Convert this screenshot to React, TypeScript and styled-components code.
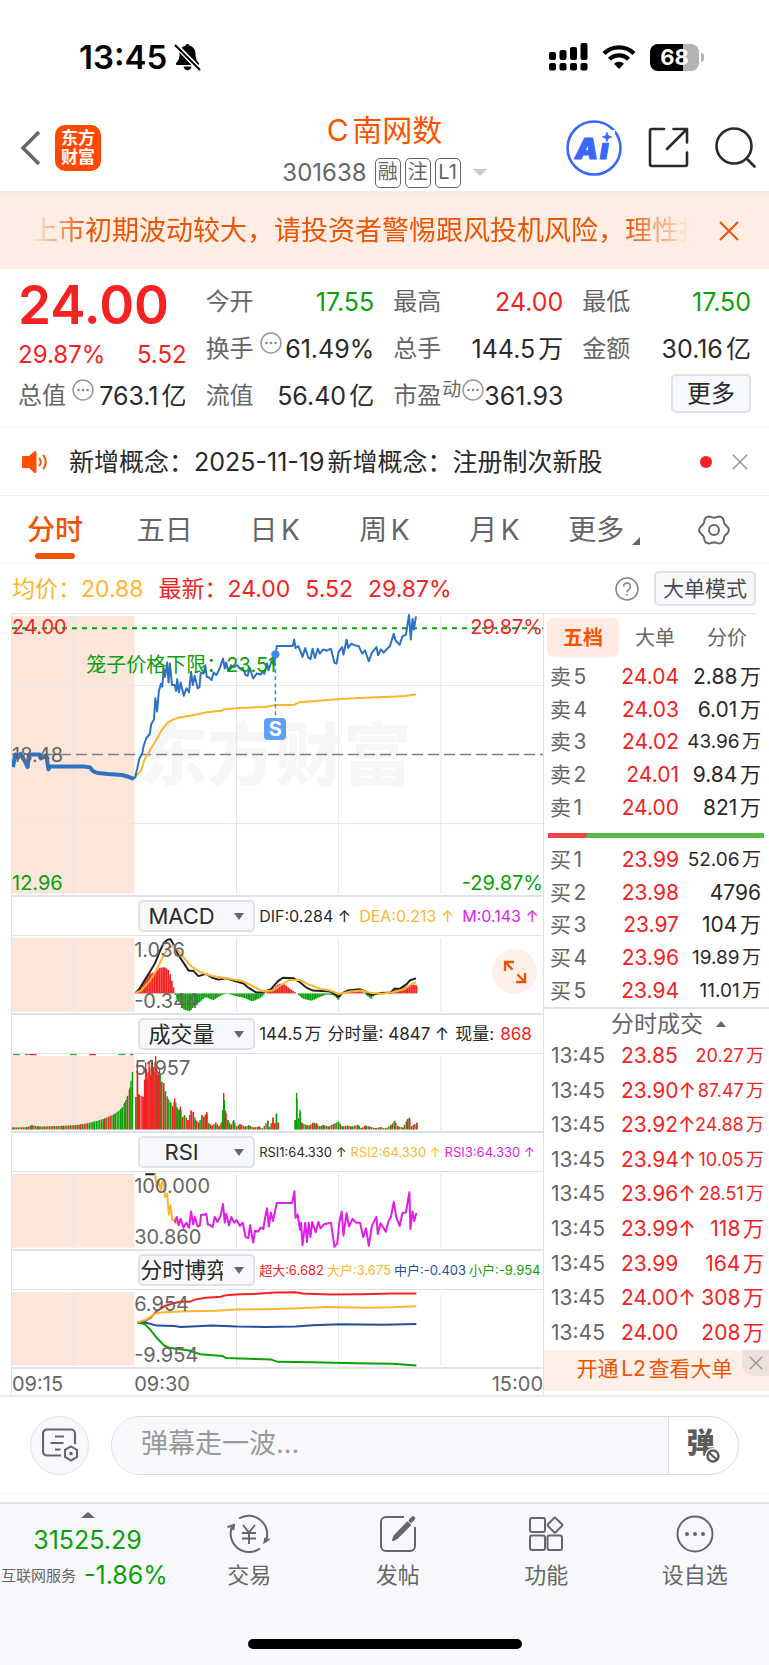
import React from "react";
import styled, { createGlobalStyle } from "styled-components";

const RED = "#f52222";
const GREEN = "#0aa00a";
const ORANGE = "#eb5502";
const YELLOW = "#fdb52e";
const MAGENTA = "#e01ee6";
const BLUE = "#2e72c4";
const NAVY = "#24509a";
const INK = "#2a2a2a";
const GREY = "#666666";
const LINE = "#dfe1e8";

const Global = createGlobalStyle`
  *, *::before, *::after { box-sizing: border-box; }
  body {
    margin: 0;
    background: #fff;
    color: ${INK};
    font-family: Inter, "Noto Sans CJK SC", sans-serif;
    text-autospace: normal;
  }
  button, input, select { font: inherit; color: inherit; }
  button { padding: 0; border: 0; background: none; cursor: pointer; }
  svg { display: block; flex: none; }
`;

const Page = styled.div`
  display: flex;
  flex-direction: column;
  min-height: 100vh;
`;

/* ---------- status bar ---------- */

const StatusBar = styled.div`
  display: flex;
  align-items: center;
  height: 104px;
  padding: 10px 65px 0 79px;
  gap: 14px;
  color: #000;
`;
const Clock = styled.span`
  display: flex;
  align-items: center;
  gap: 7px;
  margin-right: auto;
  font-size: 33px;
  line-height: 40px;
  font-weight: 600;
`;
const Battery = styled.span`
  display: flex;
  align-items: center;
  gap: 2px;
  &::after {
    content: "";
    width: 3px;
    height: 9px;
    border-radius: 0 4px 4px 0;
    background: #b4b4b4;
  }
`;
const BatteryBody = styled.span`
  width: 49px;
  height: 27px;
  border-radius: 8px;
  background: linear-gradient(90deg, #000 68%, #b4b4b4 68%);
  color: #fff;
  font-size: 22px;
  line-height: 27px;
  font-weight: 700;
  text-align: center;
`;

/* ---------- title bar ---------- */

const TitleBar = styled.header`
  display: grid;
  grid-template-columns: 1fr auto 1fr;
  align-items: center;
  height: 89px;
  padding: 0 13px;
  border-bottom: 2px solid #ececec;
`;
const Side = styled.div<{ $end?: boolean }>`
  display: flex;
  align-items: center;
  justify-content: ${(p) => (p.$end ? "flex-end" : "flex-start")};
  gap: ${(p) => (p.$end ? "26px" : "14px")};
  padding-left: ${(p) => (p.$end ? 0 : 7)}px;
`;
const Logo = styled.a`
  display: grid;
  place-content: center;
  width: 46px;
  height: 46px;
  border-radius: 10px;
  background: #ff4800;
  color: #fff;
  font-size: 17px;
  line-height: 19px;
  font-weight: 700;
  text-decoration: none;
`;
const Title = styled.div`
  display: flex;
  flex-direction: column;
  align-items: center;
  gap: 3px;
  padding-top: 5px;
`;
const StockName = styled.h1`
  margin: 0;
  color: #fb5200;
  font-size: 30px;
  line-height: 42px;
  font-weight: 400;
`;
const StockMeta = styled.div`
  display: flex;
  align-items: center;
  gap: 4px;
  height: 37px;
  color: ${GREY};
  font-size: 24px;
  line-height: 30px;
`;
const Code = styled.span`
  margin-right: 4px;
`;
const Tag = styled.span`
  width: 26px;
  height: 30px;
  border: 1px solid ${GREY};
  border-radius: 5px;
  font-size: 20px;
  line-height: 27px;
  text-align: center;
`;
const CaretDown = styled.span<{ $c?: string; $w?: number; $up?: boolean }>`
  width: 0;
  height: 0;
  border: ${(p) => (p.$w ?? 7)}px solid transparent;
  border-bottom-width: ${(p) => (p.$up ? 6 : 0)}px;
  border-top-width: ${(p) => (p.$up ? 0 : 7)}px;
  border-top-color: ${(p) => (p.$up ? "transparent" : p.$c ?? GREY)};
  border-bottom-color: ${(p) => (p.$up ? p.$c ?? GREY : "transparent")};
`;
const MetaCaret = styled(CaretDown)`
  margin-left: 8px;
`;

/* ---------- banners ---------- */

const RiskBanner = styled.div`
  display: flex;
  align-items: center;
  gap: 30px;
  height: 76px;
  padding: 0 30px 0 31px;
  background: #feede4;
  color: ${ORANGE};
`;
const Marquee = styled.p`
  flex: 1;
  margin: 0;
  overflow: hidden;
  white-space: nowrap;
  font-size: 27px;
  line-height: 40px;
  mask-image: linear-gradient(90deg, transparent, #000 56px, #000 calc(100% - 64px), transparent);
`;
const NewsBar = styled.div`
  display: flex;
  align-items: center;
  gap: 20px;
  height: 69px;
  padding: 0 21px;
  border-top: 1px solid #efefef;
  border-bottom: 1px solid #efefef;
`;
const NewsText = styled.a`
  flex: 1;
  color: ${INK};
  font-size: 25px;
  line-height: 40px;
  text-decoration: none;
  white-space: nowrap;
`;
const Dot = styled.span`
  width: 12px;
  height: 12px;
  border-radius: 6px;
  background: ${RED};
`;

/* ---------- quote ---------- */

const Quote = styled.section`
  display: grid;
  grid-template-columns: repeat(4, 1fr);
  grid-auto-rows: 47px;
  column-gap: 19px;
  padding: 9px 18px 8px;
`;
const PriceBlock = styled.div`
  grid-row: span 2;
  color: ${RED};
`;
const Price = styled.div`
  font-size: 53px;
  line-height: 54px;
  font-weight: 600;
`;
const Change = styled.div`
  display: flex;
  justify-content: space-between;
  font-size: 24px;
  line-height: 46px;
`;
const Field = styled.div`
  display: flex;
  align-items: center;
  white-space: nowrap;
`;
const FieldLabel = styled.span`
  color: ${GREY};
  font-size: 24px;
  line-height: 40px;
`;
const Sup = styled.sup`
  align-self: flex-start;
  margin-left: 1px;
  color: ${GREY};
  font-size: 19px;
  line-height: 36px;
`;
const Info = styled.button<{ $near?: boolean }>`
  align-self: flex-start;
  margin: 7px 0 0 ${(p) => (p.$near ? "1px" : "6px")};
`;
const FieldValue = styled.span<{ $c?: string }>`
  margin-left: auto;
  color: ${(p) => p.$c ?? INK};
  font-size: 25px;
  line-height: 40px;
`;
const SoftButton = styled.button<{ $w: number; $h: number; $size: number }>`
  width: ${(p) => p.$w}px;
  height: ${(p) => p.$h}px;
  border: 2px solid ${LINE};
  border-radius: 5px;
  background: #f7f8fb;
  color: ${INK};
  font-size: ${(p) => p.$size}px;
  line-height: 28px;
  white-space: nowrap;
`;
const ModeButton = styled(SoftButton)`
  color: #4a4a4a;
`;
const MoreField = styled(Field)`
  justify-content: flex-end;
  align-items: flex-start;
  padding-top: 2px;
`;

/* ---------- period tabs ---------- */

const Tabs = styled.nav`
  display: grid;
  grid-template-columns: repeat(7, 1fr);
  height: 68px;
  border-bottom: 1px solid #efefef;
`;
const Tab = styled.button<{ $on?: boolean }>`
  position: relative;
  display: flex;
  align-items: center;
  justify-content: center;
  color: ${(p) => (p.$on ? "#f45200" : GREY)};
  font-size: 28px;
  font-weight: ${(p) => (p.$on ? 500 : 400)};
  line-height: 40px;
  &::after {
    content: "";
    display: ${(p) => (p.$on ? "block" : "none")};
    position: absolute;
    bottom: 4px;
    width: 40px;
    height: 6px;
    border-radius: 3px;
    background: ${ORANGE};
  }
`;
const Corner = styled.span`
  align-self: flex-end;
  width: 0;
  height: 0;
  margin: 0 0 18px 8px;
  border-left: 8px solid transparent;
  border-bottom: 8px solid ${GREY};
`;

const SummaryRow = styled.div`
  display: flex;
  align-items: center;
  gap: 15px;
  height: 49px;
  padding: 0 13px 0 12px;
  font-size: 23px;
  line-height: 32px;
  white-space: nowrap;
`;
const Figure = styled.span<{ $c: string }>`
  color: ${(p) => p.$c};
`;
const HelpButton = styled.button`
  margin-left: auto;
`;

/* ---------- trading area ---------- */

const Trading = styled.main`
  display: grid;
  grid-template-columns: minmax(0, 1fr) 226px;
  padding-left: 11px;
  border-bottom: 2px solid #e9e9ec;
`;
const Charts = styled.section`
  border-left: 1px solid ${LINE};
`;
const Panel = styled.div<{ $h: number }>`
  position: relative;
  height: ${(p) => p.$h}px;
  border-top: 1px solid ${LINE};
  border-bottom: 2px solid ${LINE};
`;
const Plot = styled.svg`
  position: absolute;
  inset: 0;
  width: 100%;
  height: 100%;
  path, line { vector-effect: non-scaling-stroke; }
`;
const AxisLabel = styled.span<{ $c?: string; $right?: boolean; $top: string; $session?: boolean }>`
  position: absolute;
  top: ${(p) => p.$top};
  ${(p) => (p.$right ? "right: 0;" : p.$session ? "left: 23%;" : "left: 0;")}
  color: ${(p) => p.$c ?? GREY};
  font-size: 20px;
  line-height: 20px;
`;
const CageLabel = styled(AxisLabel)`
  left: 14%;
`;
const Watermark = styled.span`
  position: absolute;
  left: 24%;
  top: 104px;
  color: #f6f6f6;
  font-size: 68px;
  line-height: 74px;
  font-weight: 900;
`;
const SellMark = styled.span`
  position: absolute;
  left: 49%;
  top: 104px;
  width: 22px;
  height: 22px;
  margin-left: -8px;
  border-radius: 4px;
  background: #5c9fff;
  color: #fff;
  font-size: 20px;
  line-height: 22px;
  font-weight: 700;
  text-align: center;
`;
const ExpandButton = styled.button`
  position: absolute;
  right: 6px;
  top: 13px;
  display: grid;
  place-content: center;
  width: 45px;
  height: 45px;
  border-radius: 50%;
  background: #fff0ea;
`;
const IndicatorHead = styled.div`
  display: flex;
  align-items: center;
  height: 38px;
  padding: 0 0 0 23%;
`;
const Picker = styled.label`
  position: relative;
  display: flex;
  flex: none;
  align-items: center;
  margin: 0 4px;
`;
const PickerCaret = styled(CaretDown)`
  position: absolute;
  right: 11px;
  pointer-events: none;
`;
const Select = styled.select`
  appearance: none;
  width: 117px;
  height: 32px;
  padding: 0 30px 0 0;
  border: 2px solid ${LINE};
  border-radius: 5px;
  background: #f7f8fb;
  color: ${INK};
  font-size: 22px;
  line-height: 28px;
  text-align: center;
  text-align-last: center;
`;
const Readings = styled.div<{ $size: number; $gap: number }>`
  display: flex;
  gap: ${(p) => p.$gap}px;
  font-size: ${(p) => p.$size}px;
  line-height: 24px;
  white-space: nowrap;
`;
const TimeAxis = styled.div`
  position: relative;
  height: 26px;
`;

/* ---------- order book ---------- */

const Book = styled.aside`
  border-left: 1px solid ${LINE};
  display: flex;
  flex-direction: column;
`;
const BookTabs = styled.div`
  display: flex;
  height: 48px;
  margin-right: 13px;
  padding: 4px 0 4px 3px;
  border-top: 1px solid ${LINE};
`;
const BookTab = styled.button<{ $on?: boolean }>`
  flex: none;
  width: 72px;
  height: 39px;
  padding-bottom: 2px;
  border-radius: 6px;
  background: ${(p) => (p.$on ? "#feece4" : "transparent")};
  color: ${(p) => (p.$on ? "#fb5200" : GREY)};
  font-size: 20px;
  font-weight: ${(p) => (p.$on ? 600 : 400)};
`;
const Levels = styled.table`
  width: 100%;
  height: 163px;
  border-collapse: collapse;
  table-layout: fixed;
`;
const LevelCell = styled.td<{ $c?: string; $small?: boolean; $w?: number }>`
  width: ${(p) => (p.$w ? p.$w + "px" : "auto")};
  padding: 0 8px 0 0;
  color: ${(p) => p.$c ?? INK};
  font-size: ${(p) => (p.$small ? 19 : 21)}px;
  line-height: 30px;
  text-align: right;
  white-space: nowrap;
`;
const LevelName = styled.th`
  width: 60px;
  padding: 0 0 0 6px;
  color: ${GREY};
  font-size: 21px;
  font-weight: 400;
  line-height: 30px;
  text-align: left;
`;
const RatioBar = styled.div`
  height: 5px;
  margin: 9px 5px 6px 4px;
  background: linear-gradient(130deg, #ef4444 31px, #58b845 31px);
`;
const TradesTitle = styled.button`
  display: flex;
  align-items: center;
  justify-content: center;
  gap: 13px;
  height: 32px;
  padding-left: 24px;
  border-top: 2px solid ${LINE};
  color: ${GREY};
  font-size: 23px;
  line-height: 28px;
`;
const Trades = styled.table`
  width: 100%;
  height: 311px;
  border-collapse: collapse;
  table-layout: fixed;
`;
const TradeCell = styled.td<{ $c?: string; $size?: number; $right?: boolean; $w?: number }>`
  width: ${(p) => (p.$w ? p.$w + "px" : "auto")};
  padding: 0 ${(p) => (p.$right ? 5 : 0)}px 0 ${(p) => (p.$c === GREY ? 7 : 0)}px;
  color: ${(p) => p.$c ?? RED};
  font-size: ${(p) => p.$size ?? 21}px;
  line-height: 30px;
  text-align: ${(p) => (p.$right ? "right" : "left")};
  white-space: nowrap;
`;
const L2Banner = styled.div`
  position: relative;
  height: 41px;
  margin-bottom: 4px;
  background: #feefe8;
`;
const L2Link = styled.a`
  display: block;
  padding-right: 4px;
  color: ${ORANGE};
  font-size: 21px;
  line-height: 38px;
  text-align: center;
  text-decoration: none;
`;
const L2Close = styled.button`
  position: absolute;
  top: 0;
  right: 0;
  display: grid;
  place-content: center;
  width: 27px;
  height: 26px;
  border-radius: 0 0 0 12px;
  background: #efe1db;
`;

/* ---------- comment bar & bottom nav ---------- */

const CommentBar = styled.form`
  display: flex;
  align-items: center;
  gap: 22px;
  height: 97px;
  padding: 0 30px;
  border-bottom: 1px solid #f1f1f1;
`;
const RoundButton = styled.button`
  display: grid;
  place-content: center;
  flex: none;
  width: 59px;
  height: 59px;
  border: 1px solid ${LINE};
  border-radius: 50%;
  background: #f7f8fb;
`;
const CommentField = styled.div`
  display: flex;
  flex: 1;
  height: 59px;
  border: 1px solid #d9dbe2;
  border-radius: 30px;
  overflow: hidden;
`;
const CommentInput = styled.input`
  flex: 1;
  min-width: 0;
  padding: 0 29px 3px;
  border: 0;
  border-right: 1px solid #d9dbe2;
  background: #f7f8fb;
  font-size: 27px;
  &::placeholder { color: #999; opacity: 1; }
`;
const BarrageButton = styled.button`
  position: relative;
  width: 69px;
  padding: 0 6px 4px 0;
  color: #5c5c5c;
  font-size: 28px;
  line-height: 40px;
  font-weight: 900;
`;
const BanBadge = styled.svg`
  position: absolute;
  left: 36px;
  top: 31px;
`;
const BottomNav = styled.footer`
  flex: 1;
  display: flex;
  flex-direction: column;
  margin-top: 8px;
  border-top: 2px solid ${LINE};
  background: #f7f8fb;
`;
const NavRow = styled.nav`
  display: grid;
  grid-template-columns: 175px repeat(4, 1fr);
`;
const NavItem = styled.button`
  display: flex;
  flex-direction: column;
  align-items: center;
  padding-top: 10px;
  color: ${GREY};
  font-size: 22px;
  line-height: 42px;
`;
const IndexItem = styled.button`
  display: flex;
  flex-direction: column;
  align-items: center;
  padding-top: 8px;
  color: ${GREEN};
  font-size: 25px;
  line-height: 35px;
`;
const IndexValue = styled.span`
  margin-top: 5px;
`;
const IndexLine = styled.span`
  display: flex;
  align-self: flex-start;
  gap: 8px;
  padding-left: 1px;
  white-space: nowrap;
`;
const IndexName = styled.span`
  color: ${GREY};
  font-size: 15px;
`;
const HomeIndicator = styled.div`
  width: 274px;
  height: 10px;
  margin: auto auto 16px;
  border-radius: 5px;
  background: #000;
`;

/* ---------- chart data ---------- */

type Pt = [number, number];

const parse = (s: string): Pt[] => s.trim().split(/\s+/).map((p) => p.split(",").map(Number) as Pt);
const toPath = (s: string) => "M" + s.trim().replace(/\s+/g, " L");

const OPEN_CALL = "36,488 42,450 50,460 58,448 70,470 78,488 82,450 112,450 116,462 132,452 138,495 142,486 240,486 258,489 266,500 280,506 310,509 350,512 370,518 384,524";
const PRICE = `384,524 388,518 394,492 400,462 408,448 412,425 420,400 430,388 434,358 442,345 446,280 451,320 456,260 462,236 466,245 470,190 474,215 480,172 484,232 488,175 494,240 502,240 506,258 509,222 514,262 519,232 528,272 536,250 543,262 549,200 554,240 559,212 568,250 573,246 577,202 585,205 590,180 594,215 602,218 608,225 614,202 622,210 632,188 641,160 646,190 650,172 656,198 664,180 672,186 682,180 690,190 698,188 706,210 712,212 718,188 728,220 738,205 750,208 756,198 760,206 768,175 772,195 782,165 788,180 796,122 842,122 846,103 850,128 858,122 866,142 870,155 878,128 886,155 893,162 899,130 906,158 914,130 920,145 930,132 940,136 952,130 962,172 968,175 974,140 984,125 988,148 997,103 1002,128 1010,115 1022,120 1032,122 1042,145 1050,135 1061,168 1070,142 1083,125 1088,150 1096,132 1104,142 1114,130 1122,122 1133,85 1138,105 1150,118 1158,92 1168,88 1177,28 1182,102 1187,40 1191,72 1197,32`;
const AVERAGE = "388,518 405,498 415,465 430,438 445,412 458,388 470,368 484,352 500,343 515,338 550,332 595,322 636,318 645,313 690,309 760,306 795,300 845,300 860,292 900,289 975,282 1050,278 1125,275 1165,273 1197,268";

const DIF = "388,298 400,285 415,258 430,232 445,205 458,170 470,142 482,131 490,130 500,150 510,175 525,200 542,228 555,228 570,245 592,238 610,250 628,256 650,252 680,262 700,268 715,282 735,295 755,296 780,285 800,260 815,250 845,252 860,262 880,280 900,290 950,293 962,300 974,310 985,298 1000,290 1035,286 1050,292 1068,304 1095,298 1125,296 1135,284 1150,285 1170,270 1180,258 1197,252";
const DEA = "388,298 405,290 430,260 450,225 470,180 485,155 497,150 512,165 530,190 550,215 575,232 610,245 650,252 695,260 725,275 755,292 785,290 810,272 830,258 860,256 885,270 920,284 950,290 975,301 1010,293 1040,290 1070,298 1100,300 1130,295 1165,285 1182,272 1197,264";
const HIST = "388,299 400,285 415,255 430,238 445,232 460,218 475,218 485,228 492,255 498,280 501,299 510,320 525,348 545,355 560,335 575,325 590,310 612,320 640,302 655,300 680,308 700,312 725,324 750,312 762,299 785,285 800,270 815,268 830,282 852,298 870,315 895,322 915,312 940,302 960,305 974,320 982,299 1010,290 1040,292 1046,299 1068,316 1078,300 1110,299 1130,288 1150,285 1185,270 1200,275";

const VOL_OPEN = "36,703 75,702 90,696 110,700 180,698 230,694 270,685 300,675 330,660 350,642 358,625 365,608 373,578 380,530";
const VOL_AM = "390,608 394,505 398,600 412,608 418,500 423,552 428,500 433,540 437,492 442,530 447,480 452,540 458,520 463,560 470,565 475,590 482,612 490,625 497,640 502,612 508,640 514,650 518,638 524,672 530,665 540,680 549,650 556,655 562,680 572,688 580,665 586,670 594,655 600,690 610,697 620,688 630,698 638,685 643,595 648,650 655,680 664,695 672,680 680,700 690,692 705,700 715,696 730,703 745,700 755,706 770,682 776,704 785,672 790,690 795,660 800,688";
const VOL_PM = "849,680 853,595 858,680 863,648 868,688 880,695 890,697 900,688 910,690 920,700 930,695 945,700 960,692 974,685 985,700 1000,697 1010,700 1030,695 1040,705 1052,697 1063,700 1080,705 1095,702 1110,706 1125,695 1136,682 1145,700 1160,703 1172,678 1178,672 1184,700 1190,695 1200,688";

const RSI_FAST = "445,128 450,170 456,150 462,178 466,152 470,150 474,200 480,190 485,255 490,225 495,272 502,270 506,285";
const RSI_MAIN = `502,280 508,262 513,288 519,268 527,296 535,280 543,296 549,245 555,285 560,262 568,292 574,290 578,255 590,255 593,252 597,285 605,288 611,294 617,262 625,278 634,258 641,222 646,280 650,252 658,288 665,262 673,280 680,272 690,290 698,280 706,325 714,328 719,288 728,342 733,305 742,308 750,295 757,300 763,260 768,235 773,292 779,248 785,275 796,219 840,219 847,182 850,265 856,255 863,302 866,280 870,350 878,280 883,340 888,280 893,325 898,278 908,310 916,278 922,298 932,285 952,280 962,355 970,345 976,280 983,245 988,320 997,250 1004,292 1014,268 1024,280 1036,280 1045,325 1053,298 1061,352 1070,290 1083,262 1087,315 1095,282 1110,308 1118,275 1125,262 1133,215 1140,262 1150,290 1158,250 1168,248 1178,185 1181,300 1187,245 1192,275 1198,250`;

const FLOW = [
  { c: RED, d: "395,577 415,574 435,560 450,542 475,525 500,517 520,512 545,513 560,506 590,500 635,497 650,492 690,489 740,488 790,484 850,483 870,487 950,490 1040,489 1130,487 1198,487" },
  { c: NAVY, d: "395,577 420,578 450,587 500,588 520,591 610,587 680,590 760,591 850,590 900,586 980,583 1100,584 1198,582" },
  { c: GREEN, d: "395,577 415,582 430,598 450,625 470,648 485,656 540,664 575,676 640,682 650,688 780,693 800,700 900,701 1020,704 1130,706 1198,711" },
  { c: YELLOW, d: "395,577 420,568 445,550 470,545 540,542 620,541 680,537 760,536 860,533 940,529 1050,531 1130,530 1198,527" },
];

/** Samples a polyline every `step` units, keeping its own vertices so peaks survive. */
function sample(s: string, step: number, keep = true): Pt[] {
  const pts = parse(s);
  const out: Pt[] = keep ? [...pts] : [];
  for (let x = pts[0][0]; x <= pts[pts.length - 1][0]; x += step) {
    const i = Math.max(1, pts.findIndex((p) => p[0] >= x));
    const [x0, y0] = pts[i - 1];
    const [x1, y1] = pts[i];
    out.push([x, y0 + ((y1 - y0) * (x - x0)) / (x1 - x0)]);
  }
  return out.sort((a, b) => a[0] - b[0]);
}

const GRID_X = [209, 680, 974, 1269];

function Grid({ y, h }: { y: number; h: number }) {
  return (
    <>
      <rect x={33} y={y + 6} width={353} height={h - 10} fill="#fce6da" />
      {GRID_X.map((x) => (
        <line key={x} x1={x} x2={x} y1={y + 6} y2={y + h - 3} stroke="#e4e6f0" strokeWidth={1} />
      ))}
    </>
  );
}

function Line({ d, c, w = 2 }: { d: string; c: string; w?: number }) {
  return <path d={toPath(d)} fill="none" stroke={c} strokeWidth={w} strokeLinejoin="round" />;
}

function Chart({ y, h, children }: { y: number; h: number; children: React.ReactNode }) {
  return (
    <Plot viewBox={`33 ${y} 1530 ${h}`} preserveAspectRatio="none" aria-hidden="true">
      <Grid y={y} h={h} />
      {children}
    </Plot>
  );
}

function VolumeBars({ d, tone }: { d: string; tone: (x: number, i: number) => string }) {
  return (
    <>
      {sample(d, 5).map(([x, y], i) => (
        <rect key={i} x={x - 2} y={y} width={4} height={709 - y} fill={tone(x, i)} />
      ))}
    </>
  );
}

const mixed = (x: number, i: number) => (Math.sin(i * 12.9 + x * 0.7) > 0 ? RED : GREEN);

/* ---------- small icons ---------- */

function Cross({ size, c, w = 2 }: { size: number; c: string; w?: number }) {
  return (
    <svg width={size} height={size} viewBox="0 0 20 20" stroke={c} strokeWidth={w} fill="none">
      <path d="M1 1 19 19M19 1 1 19" />
    </svg>
  );
}

function InfoIcon() {
  return (
    <svg width="22" height="22" viewBox="0 0 22 22" fill="none" stroke="#999" strokeWidth="1.5">
      <circle cx="11" cy="11" r="10" />
      <g fill="#888" stroke="none">
        <circle cx="6.5" cy="11" r="1.3" />
        <circle cx="11" cy="11" r="1.3" />
        <circle cx="15.5" cy="11" r="1.3" />
      </g>
    </svg>
  );
}

const gearPath =
  "M" +
  Array.from({ length: 72 }, (_, i) => {
    const a = (i * Math.PI) / 36;
    const r = 13.6 + 1.3 * Math.cos(6 * a);
    return `${(17 + r * Math.cos(a)).toFixed(2)} ${(17 + r * Math.sin(a)).toFixed(2)}`;
  }).join("L") +
  "Z";

/* ---------- sections ---------- */

function Header() {
  return (
    <>
      <StatusBar>
        <Clock>
          13:45
          <svg width="27" height="28" viewBox="0 0 27 28" fill="#000">
            <path d="M13.5 1c1.2 0 2 .8 2.2 1.8 3.8 1 5.8 4 5.8 8 0 5 1.3 7 3.3 9.2.8 1 .2 2-1 2H3.2c-1.2 0-1.800-1-1-2 2-2.200 3.300-4.200 3.300-9.200 0-4 2-7 5.800-8C11.500 1.800 12.300 1 13.500 1z" />
            <path d="M9.5 23.5h8c-.4 2.3-2 3.700-4 3.700s-3.600-1.400-4-3.700z" />
            <path d="M2 2.500 25.500 26.500" stroke="#fff" strokeWidth="5" />
            <path d="M1.500 2.500 25.500 26.500" stroke="#000" strokeWidth="2" strokeLinecap="round" />
          </svg>
        </Clock>
        <svg width="39" height="28" viewBox="0 0 39 28" fill="#000">
          <rect x="0" y="9" width="7" height="8" rx="2" />
          <rect x="10.5" y="7" width="7" height="10" rx="2" />
          <rect x="21" y="4" width="7" height="13" rx="2" />
          <rect x="31.5" y="0" width="7" height="17" rx="2" />
          <rect x="0" y="20" width="7" height="7.5" rx="2" />
          <rect x="10.5" y="20" width="7" height="7.5" rx="2" />
          <rect x="21" y="20" width="7" height="7.5" rx="2" />
          <rect x="31.5" y="20" width="7" height="7.5" rx="2" />
        </svg>
        <svg width="34" height="26" viewBox="0 0 34 26" fill="none" stroke="#000" strokeWidth="4.4">
          <path d="M2 9.500a21.500 21.500 0 0 1 30 0" />
          <path d="M7.500 15.200a13.600 13.600 0 0 1 19 0" />
          <path d="M17 25l-5-5.200a7.200 7.200 0 0 1 10 0z" fill="#000" stroke="none" />
        </svg>
        <Battery>
          <BatteryBody>68</BatteryBody>
        </Battery>
      </StatusBar>

      <TitleBar>
        <Side>
          <button aria-label="返回">
            <svg width="21" height="36" viewBox="0 0 21 36" fill="none" stroke={GREY} strokeWidth="3.5">
              <path d="M19 2 3 18l16 16" />
            </svg>
          </button>
          <Logo href="#home">
            <span>东方</span>
            <span>财富</span>
          </Logo>
        </Side>
        <Title>
          <StockName>C南网数</StockName>
          <StockMeta>
            <Code>301638</Code>
            <Tag>融</Tag>
            <Tag>注</Tag>
            <Tag>L1</Tag>
            <MetaCaret $c="#c8c8c8" />
          </StockMeta>
        </Title>
        <Side $end>
          <button aria-label="AI 助手">
            <svg width="56" height="56" viewBox="0 0 56 56">
              <circle cx="28" cy="28" r="26.5" fill="#fff" stroke="#3a68ff" strokeWidth="2.6" />
              <text x="9 34" y="38.5" fill="#3a68ff" stroke="#3a68ff" strokeWidth="1.2" strokeLinejoin="round" fontSize="29" fontWeight="900" fontStyle="italic" fontFamily="Inter, sans-serif">
                Ai
              </text>
              <path d="M34 10h15v12.500H34z" fill="#fff" />
              <path d="M41 12.500c.8 3 1.500 3.700 4.500 4.500-3 .8-3.700 1.500-4.500 4.500-.8-3-1.500-3.700-4.500-4.500 3-.8 3.700-1.500 4.500-4.500z" fill="#3a68ff" stroke="#3a68ff" />
            </svg>
          </button>
          <button aria-label="分享">
            <svg width="41" height="41" viewBox="0 0 41 41" fill="none" stroke={INK} strokeWidth="2.6" strokeLinecap="round" strokeLinejoin="round">
              <path d="M16 2H4a2 2 0 0 0-2 2v33a2 2 0 0 0 2 2h33a2 2 0 0 0 2-2V25.500M25.500 2H39v13.500M38 3 19 22" />
            </svg>
          </button>
          <button aria-label="搜索">
            <svg width="41" height="41" viewBox="0 0 41 41" fill="none" stroke={INK} strokeWidth="2.6" strokeLinecap="round">
              <circle cx="19" cy="19" r="17.5" />
              <path d="m31.500 31.500 8 8" />
            </svg>
          </button>
        </Side>
      </TitleBar>

      <RiskBanner>
        <Marquee>上市初期波动较大，请投资者警惕跟风投机风险，理性投资</Marquee>
        <button aria-label="关闭风险提示">
          <Cross size={20} c={ORANGE} />
        </button>
      </RiskBanner>
    </>
  );
}

function QuotePanel() {
  return (
    <Quote>
      <PriceBlock>
        <Price>24.00</Price>
        <Change>
          <span>29.87%</span>
          <span>5.52</span>
        </Change>
      </PriceBlock>
      <Field><FieldLabel>今开</FieldLabel><FieldValue $c={GREEN}>17.55</FieldValue></Field>
      <Field><FieldLabel>最高</FieldLabel><FieldValue $c={RED}>24.00</FieldValue></Field>
      <Field><FieldLabel>最低</FieldLabel><FieldValue $c={GREEN}>17.50</FieldValue></Field>
      <Field>
        <FieldLabel>换手</FieldLabel>
        <Info aria-label="换手说明"><InfoIcon /></Info>
        <FieldValue>61.49%</FieldValue>
      </Field>
      <Field><FieldLabel>总手</FieldLabel><FieldValue>144.5万</FieldValue></Field>
      <Field><FieldLabel>金额</FieldLabel><FieldValue>30.16亿</FieldValue></Field>
      <Field>
        <FieldLabel>总值</FieldLabel>
        <Info aria-label="总值说明"><InfoIcon /></Info>
        <FieldValue>763.1亿</FieldValue>
      </Field>
      <Field><FieldLabel>流值</FieldLabel><FieldValue>56.40亿</FieldValue></Field>
      <Field>
        <FieldLabel>市盈</FieldLabel>
        <Sup>动</Sup>
        <Info $near aria-label="市盈说明"><InfoIcon /></Info>
        <FieldValue>361.93</FieldValue>
      </Field>
      <MoreField>
        <SoftButton $w={80} $h={39} $size={24}>更多</SoftButton>
      </MoreField>
    </Quote>
  );
}

function Indicator({ name, size, gap, readings, children }: {
  name: string; size: number; gap: number; readings: [string, string][]; children: React.ReactNode;
}) {
  return (
    <>
      <IndicatorHead>
        <Picker>
          <Select aria-label="指标" defaultValue={name}>
            <option>{name}</option>
          </Select>
          <PickerCaret $w={5} />
        </Picker>
        <Readings $size={size} $gap={gap}>
          {readings.map(([text, c]) => (
            <Figure key={text} $c={c}>{text}</Figure>
          ))}
        </Readings>
      </IndicatorHead>
      <Panel $h={80}>{children}</Panel>
    </>
  );
}

function ChartColumn() {
  return (
    <Charts>
      <Panel $h={284}>
        <Watermark aria-hidden="true">东方财富</Watermark>
        <Chart y={25} h={850}>
          <line x1={33} x2={1565} y1={241} y2={241} stroke="#e4e6f0" />
          <line x1={33} x2={1565} y1={659} y2={659} stroke="#e4e6f0" />
          <line x1={33} x2={1565} y1={450} y2={450} stroke="#808080" strokeWidth={1.5} strokeDasharray="11 5" />
          <line x1={33} x2={1565} y1={68} y2={68} stroke={GREEN} strokeWidth={2} strokeDasharray="5 5" />
          <Line d={AVERAGE} c={YELLOW} />
          <Line d={OPEN_CALL} c={BLUE} w={4} />
          <Line d={PRICE} c={BLUE} />
          <line x1={792} x2={792} y1={150} y2={340} stroke="#3d8bf2" strokeWidth={1.5} strokeDasharray="4 3" />
          <ellipse cx={792} cy={147} rx={12} ry={12.5} fill="#3d8bf2" />
        </Chart>
        <AxisLabel $top="3px" $c={RED}>24.00</AxisLabel>
        <AxisLabel $top="3px" $c={RED} $right>29.87%</AxisLabel>
        <AxisLabel $top="131px">18.48</AxisLabel>
        <AxisLabel $top="259px" $c={GREEN}>12.96</AxisLabel>
        <AxisLabel $top="259px" $c={GREEN} $right>-29.87%</AxisLabel>
        <CageLabel $top="41px" $c={GREEN}>笼子价格下限：23.51</CageLabel>
        <SellMark>S</SellMark>
      </Panel>

      <Indicator name="MACD" size={16} gap={8} readings={[["DIF:0.284 ↑", INK], ["DEA:0.213 ↑", YELLOW], ["M:0.143 ↑", MAGENTA]]}>
        <Chart y={120} h={240}>
          {sample(HIST, 5, false).map(([x, y], i) => (
            <rect key={i} x={x - 2} width={5} y={Math.min(y, 299)} height={Math.abs(y - 299)} fill={y < 299 ? RED : GREEN} />
          ))}
          <Line d={DIF} c="#222" />
          <Line d={DEA} c={YELLOW} />
        </Chart>
        <AxisLabel $top="4px" $session>1.036</AxisLabel>
        <AxisLabel $top="55px" $session>-0.344</AxisLabel>
        <ExpandButton aria-label="全屏">
          <svg width="24" height="24" viewBox="0 0 24 24" fill="none" stroke={ORANGE} strokeWidth="2.3">
            <path d="M2 11V2h9M2.500 2.500l7 7M22 13v9h-9M21.500 21.500l-7-7" />
          </svg>
        </ExpandButton>
      </Indicator>

      <Indicator name="成交量" size={17} gap={6} readings={[["144.5万", INK], ["分时量: 4847 ↑", INK], ["现量:", INK], ["868", RED]]}>
        <Chart y={474} h={240}>
          <VolumeBars d={VOL_OPEN} tone={(x) => (x > 376 || (x > 250 && x < 295) || (x > 330 && x < 358) ? GREEN : mixed(x, Math.floor(x / 20)))} />
          <VolumeBars d={VOL_AM} tone={(x, i) => (x < 392 ? GREEN : x < 450 ? RED : mixed(x, i))} />
          <VolumeBars d={VOL_PM} tone={(x, i) => (x > 850 && x < 866 ? GREEN : mixed(x, i))} />
          <path d="M36 476H100M200 476H225M255 476H290M340 476H380" stroke={GREEN} strokeWidth={1} strokeDasharray="7 5 3 2" />
          <path d="M80 476H105M258 476H275M373 476H383" stroke={RED} strokeWidth={1} />
        </Chart>
        <AxisLabel $top="4px" $session>51957</AxisLabel>
      </Indicator>

      <Indicator name="RSI" size={13} gap={4} readings={[["RSI1:64.330 ↑", INK], ["RSI2:64.330 ↑", YELLOW], ["RSI3:64.330 ↑", MAGENTA]]}>
        <Chart y={122} h={240}>
          <Line d="417,129 447,129" c="#222" />
          <Line d={RSI_FAST} c={YELLOW} />
          <Line d={RSI_MAIN} c={MAGENTA} />
        </Chart>
        <AxisLabel $top="4px" $session>100.000</AxisLabel>
        <AxisLabel $top="55px" $session>30.860</AxisLabel>
      </Indicator>

      <Indicator name="分时博弈" size={13} gap={3} readings={[["超大:6.682", RED], ["大户:3.675", YELLOW], ["中户:-0.403", NAVY], ["小户:-9.954", GREEN]]}>
        <Chart y={476} h={240}>
          {FLOW.map((f) => <Line key={f.c} d={f.d} c={f.c} />)}
        </Chart>
        <AxisLabel $top="4px" $session>6.954</AxisLabel>
        <AxisLabel $top="55px" $session>-9.954</AxisLabel>
      </Indicator>

      <TimeAxis>
        <AxisLabel $top="5px">09:15</AxisLabel>
        <AxisLabel $top="5px" $session>09:30</AxisLabel>
        <AxisLabel $top="5px" $right>15:00</AxisLabel>
      </TimeAxis>
    </Charts>
  );
}

const ASKS = [
  ["卖5", "24.04", "2.88万"],
  ["卖4", "24.03", "6.01万"],
  ["卖3", "24.02", "43.96万"],
  ["卖2", "24.01", "9.84万"],
  ["卖1", "24.00", "821万"],
];
const BIDS = [
  ["买1", "23.99", "52.06万"],
  ["买2", "23.98", "4796"],
  ["买3", "23.97", "104万"],
  ["买4", "23.96", "19.89万"],
  ["买5", "23.94", "11.01万"],
];
const TRADES = [
  ["23.85", "20.27万"],
  ["23.90↑", "87.47万"],
  ["23.92↑", "24.88万"],
  ["23.94↑", "10.05万"],
  ["23.96↑", "28.51万"],
  ["23.99↑", "118万"],
  ["23.99", "164万"],
  ["24.00↑", "308万"],
  ["24.00", "208万"],
];

function LevelTable({ rows }: { rows: string[][] }) {
  return (
    <Levels>
      <tbody>
        {rows.map(([name, price, size]) => (
          <tr key={name}>
            <LevelName scope="row">{name}</LevelName>
            <LevelCell $c={RED} $w={83}>{price}</LevelCell>
            <LevelCell $small={size.length > 5}>{size}</LevelCell>
          </tr>
        ))}
      </tbody>
    </Levels>
  );
}

function BookColumn() {
  return (
    <Book>
      <BookTabs>
        <BookTab $on>五档</BookTab>
        <BookTab>大单</BookTab>
        <BookTab>分价</BookTab>
      </BookTabs>
      <LevelTable rows={ASKS} />
      <RatioBar />
      <LevelTable rows={BIDS} />
      <TradesTitle>
        分时成交
        <CaretDown $w={5} $up />
      </TradesTitle>
      <Trades>
        <tbody>
          {TRADES.map(([price, size], i) => (
            <tr key={i}>
              <TradeCell $c={GREY} $w={77}>13:45</TradeCell>
              <TradeCell $w={73}>{price}</TradeCell>
              <TradeCell $right $size={size.length > 5 ? 18 : 21}>{size}</TradeCell>
            </tr>
          ))}
        </tbody>
      </Trades>
      <L2Banner>
        <L2Link href="#l2">开通L2查看大单</L2Link>
        <L2Close aria-label="关闭">
          <Cross size={14} c="#999" />
        </L2Close>
      </L2Banner>
    </Book>
  );
}

function Footer() {
  const stroke = { fill: "none", stroke: GREY, strokeWidth: 2 };
  return (
    <BottomNav>
      <NavRow>
        <IndexItem>
          <CaretDown $w={7} $up />
          <IndexValue>31525.29</IndexValue>
          <IndexLine>
            <IndexName>互联网服务</IndexName>
            <span>-1.86%</span>
          </IndexLine>
        </IndexItem>
        <NavItem>
          <svg width="44" height="40" viewBox="0 0 44 40" {...stroke}>
            <path d="M12 4.500A18.500 18.500 0 0 1 38.500 28M42.500 25l-5 3.200.8-4.500M33 34.500A18.500 18.500 0 0 1 5.500 11.500M.5 13l6.500-2-.8 5" />
            <path d="m16 11 6 7.500 6-7.500M15 19h14M15 24.500h14M22 18.500V30" />
          </svg>
          交易
        </NavItem>
        <NavItem>
          <svg width="44" height="40" viewBox="0 0 44 40" {...stroke}>
            <path d="M28 3H10a5 5 0 0 0-5 5v24a5 5 0 0 0 5 5h24a5 5 0 0 0 5-5V13" />
            <path d="m31.500 8.500 2.500 2.500L21 24l-4 2 1.500-4z" fill={GREY} strokeLinejoin="round" />
            <path d="m35 6.500 2-2" strokeWidth="4.5" strokeLinecap="round" />
          </svg>
          发帖
        </NavItem>
        <NavItem>
          <svg width="44" height="40" viewBox="0 0 44 40" {...stroke}>
            <rect x="6" y="4" width="15" height="14" rx="2" />
            <rect x="6" y="21.5" width="15" height="14.5" rx="2" />
            <rect x="23.5" y="21.5" width="14.5" height="14.5" rx="2" />
            <path d="m31 3.500 7.200 7a1 1 0 0 1 0 1.200L31.500 18.500a1 1 0 0 1-1.200 0l-6.600-6.800a1 1 0 0 1 0-1.200l6.600-6.800a.8.8 0 0 1 .7-.2z" />
          </svg>
          功能
        </NavItem>
        <NavItem>
          <svg width="44" height="40" viewBox="0 0 44 40" {...stroke}>
            <circle cx="22" cy="20" r="17.5" />
            <g fill={GREY} stroke="none">
              <circle cx="14" cy="20" r="2" />
              <circle cx="22" cy="20" r="2" />
              <circle cx="30" cy="20" r="2" />
            </g>
          </svg>
          设自选
        </NavItem>
      </NavRow>
      <HomeIndicator />
    </BottomNav>
  );
}

export default function App() {
  return (
    <Page>
      <Global />
      <Header />
      <QuotePanel />
      <NewsBar>
        <svg width="28" height="24" viewBox="0 0 28 24" fill="#ff4f00">
          <path d="M2 6h6l5-4.500q2.500-1.500 2.500 1.500v18q0 3-2.500 1.500L8 18H2q-1 0-1-1V7q0-1 1-1z" />
          <path d="M18.500 8.500q2.500 3.500 0 7M22.500 5.500q4.500 6.500 0 13" fill="none" stroke="#ff4f00" strokeWidth="2" strokeLinecap="round" />
        </svg>
        <NewsText href="#news">新增概念：2025-11-19新增概念：注册制次新股</NewsText>
        <Dot />
        <button aria-label="关闭消息">
          <Cross size={16} c="#999" />
        </button>
      </NewsBar>
      <Tabs>
        <Tab $on>分时</Tab>
        <Tab>五日</Tab>
        <Tab>日K</Tab>
        <Tab>周K</Tab>
        <Tab>月K</Tab>
        <Tab>更多<Corner /></Tab>
        <Tab aria-label="设置">
          <svg width="34" height="34" viewBox="0 0 34 34" fill="none" stroke={GREY} strokeWidth="2">
            <path d={gearPath} />
            <circle cx="17" cy="17" r="5" />
          </svg>
        </Tab>
      </Tabs>
      <SummaryRow>
        <Figure $c={YELLOW}>均价：20.88</Figure>
        <Figure $c={RED}>最新：24.00</Figure>
        <Figure $c={RED}>5.52</Figure>
        <Figure $c={RED}>29.87%</Figure>
        <HelpButton aria-label="帮助">
          <svg width="24" height="24" viewBox="0 0 24 24" fill="none" stroke="#888" strokeWidth="1.6">
            <circle cx="12" cy="12" r="11" />
            <path d="M8.500 9.500a3.500 3.500 0 1 1 5.500 2.800c-1.300 1-2 1.500-2 3M12 17v1.800" />
          </svg>
        </HelpButton>
        <ModeButton $w={102} $h={35} $size={21}>大单模式</ModeButton>
      </SummaryRow>
      <Trading>
        <ChartColumn />
        <BookColumn />
      </Trading>
      <CommentBar>
        <RoundButton type="button" aria-label="弹幕设置">
          <svg width="36" height="34" viewBox="0 0 36 34" fill="none" stroke={GREY} strokeWidth="2.2">
            <path d="M19 27.500H5a4 4 0 0 1-4-4V5.500a4 4 0 0 1 4-4h24a4 4 0 0 1 4 4V16M13 8.500h9M8.500 15h13M13 21.500h5.500" />
            <path d="m29 18.500 6 3.400v7L29 32.500l-6-3.600v-7z" strokeWidth="2" />
            <circle cx="29" cy="25.5" r="1.8" fill={GREY} stroke="none" />
          </svg>
        </RoundButton>
        <CommentField>
          <CommentInput aria-label="弹幕" placeholder="弹幕走一波..." />
          <BarrageButton type="button">
            弹
            <BanBadge width="16" height="16" viewBox="0 0 16 16">
              <circle cx="8" cy="8" r="8" fill="#fff" />
              <circle cx="8" cy="8" r="5.5" fill="none" stroke="#5c5c5c" strokeWidth="2.5" />
              <path d="m4 4.500 8 7.500" stroke="#5c5c5c" strokeWidth="2.2" />
            </BanBadge>
          </BarrageButton>
        </CommentField>
      </CommentBar>
      <Footer />
    </Page>
  );
}
